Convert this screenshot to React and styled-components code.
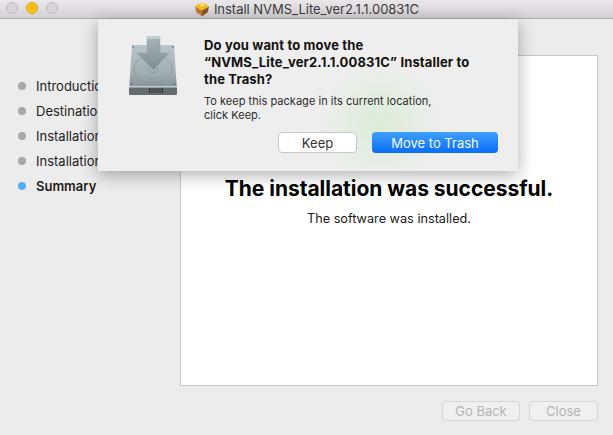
import styled, { createGlobalStyle } from "styled-components";

const GlobalStyle = createGlobalStyle`
  html, body { margin: 0; padding: 0; }
  body {
    width: 613px;
    height: 435px;
    overflow: hidden;
    background: #ececec;
    font-family: "Inter", "Liberation Sans", sans-serif;
    -webkit-font-smoothing: antialiased;
  }
`;

const steps = [
  { label: "Introduction" },
  { label: "Destination Select" },
  { label: "Installation Type" },
  { label: "Installation" },
  { label: "Summary", active: true },
];

const PackageIcon = () => (
  <svg width="16" height="15" viewBox="0 0 18 16">
    <path d="M9 8 L17 4 L15.5 11 L9 15.5 Z" fill="#8f5226" />
    <path d="M9 8 L1 4 L2.5 11 L9 15.5 Z" fill="#c47a3c" />
    <path d="M1 5 L5 1.5 L9 0.5 L13 1.5 L17 5 L9 9 Z" fill="#f2b92a" />
    <path d="M5 2 L9 1 L13 2.5 L9 5 Z" fill="#f9dd70" />
  </svg>
);

const DiskIcon = () => (
  <svg width="50" height="60" viewBox="0 0 50 60">
    <defs>
      <linearGradient id="body" x1="0" y1="0" x2="0" y2="1">
        <stop offset="0" stopColor="#b8c6cc" />
        <stop offset="0.55" stopColor="#a2b0b4" />
        <stop offset="1" stopColor="#7e8a8c" />
      </linearGradient>
      <linearGradient id="arrow" x1="0" y1="0" x2="0" y2="1">
        <stop offset="0" stopColor="#a9b5b8" />
        <stop offset="1" stopColor="#7d8b90" />
      </linearGradient>
    </defs>
    <path d="M4 9 H46 L49 55 Q49 57 47 57 H3 Q1 57 1 55 Z" fill="url(#body)" />
    <rect x="1" y="51" width="48" height="8" rx="1.5" fill="#646c6e" />
    <rect x="1" y="50" width="48" height="1.5" fill="#c3cdd0" />
    <ellipse cx="25" cy="33" rx="19" ry="14" fill="none" stroke="#8a979b" strokeWidth="0.8" />
    <ellipse cx="25" cy="33" rx="5" ry="3.5" fill="none" stroke="#8a979b" strokeWidth="0.8" />
    <path d="M19 1 Q19 0 20 0 H31 Q32 0 32 1 V17 H41 L25.5 34 L9 17 H19 Z" fill="url(#arrow)" stroke="#96a3a7" strokeWidth="0.5" />
    <rect x="19" y="0" width="13" height="3" fill="#c2cccf" />
    <rect x="21" y="52" width="14" height="5" fill="#2e3436" />
    <path d="M23 52 V57 M25 52 V57 M27 52 V57 M29 52 V57 M31 52 V57 M33 52 V57" stroke="#8a9496" strokeWidth="0.7" />
    <circle cx="5" cy="11" r="0.8" fill="#4c5659" />
    <circle cx="45" cy="11" r="0.8" fill="#4c5659" />
    <circle cx="3.5" cy="48" r="0.8" fill="#4c5659" />
    <circle cx="46.5" cy="48" r="0.8" fill="#4c5659" />
  </svg>
);

export default function App() {
  return (
    <Window>
      <GlobalStyle />
      <TitleBar>
        <Lights>
          <Light />
          <Light $color="#fdbc1a" />
          <Light />
        </Lights>
        <Title>
          <PackageIcon />
          Install NVMS_Lite_ver2.1.1.00831C
        </Title>
      </TitleBar>
      <Body>
        <Sidebar>
          {steps.map((step) => (
            <Step key={step.label} $active={step.active}>
              <Bullet $active={step.active} />
              {step.label}
            </Step>
          ))}
        </Sidebar>
        <Main>
          <Panel>
            <Headline>The installation was successful.</Headline>
            <Subline>The software was installed.</Subline>
          </Panel>
          <Footer>
            <FooterButton $width={78}>Go Back</FooterButton>
            <FooterButton $width={69}>Close</FooterButton>
          </Footer>
        </Main>
      </Body>
      <Dialog>
        <IconSlot>
          <DiskIcon />
        </IconSlot>
        <DialogText>
          <Question>
            Do you want to move the
            <br />
            “NVMS_Lite_ver2.1.1.00831C” Installer to
            <br />
            the Trash?
          </Question>
          <Note>
            To keep this package in its current location,
            <br />
            click Keep.
          </Note>
          <Actions>
            <KeepButton>Keep</KeepButton>
            <TrashButton>Move to Trash</TrashButton>
          </Actions>
        </DialogText>
      </Dialog>
    </Window>
  );
}

const Window = styled.div`
  position: relative;
  width: 613px;
  height: 435px;
  display: flex;
  flex-direction: column;
  overflow: hidden;
`;

const TitleBar = styled.div`
  position: relative;
  height: 18px;
  flex: none;
  display: flex;
  align-items: center;
  justify-content: center;
  background: linear-gradient(#e9e7e9, #d3d1d3);
  border-bottom: 1px solid #aeacae;
`;

const Lights = styled.div`
  position: absolute;
  left: 6px;
  top: 2px;
  display: flex;
  gap: 8px;
`;

const Light = styled.span`
  width: 12px;
  height: 12px;
  box-sizing: border-box;
  border-radius: 50%;
  background: ${({ $color }) => $color || "#d6d4d6"};
  border: 1px solid ${({ $color }) => ($color ? "#e9a820" : "#bfbdbf")};
`;

const Title = styled.div`
  display: flex;
  align-items: center;
  gap: 4px;
  font-size: 13px;
  letter-spacing: -0.02px;
  color: #3c3c3c;
  white-space: nowrap;
`;

const Body = styled.div`
  flex: 1;
  display: flex;
`;

const Sidebar = styled.div`
  width: 180px;
  flex: none;
  box-sizing: border-box;
  padding: 54px 0 0 18px;
  display: flex;
  flex-direction: column;
`;

const Step = styled.div`
  height: 25px;
  display: flex;
  align-items: center;
  gap: 10px;
  font-size: 13px;
  font-weight: ${({ $active }) => ($active ? 600 : 400)};
  color: #1d1d1d;
  white-space: nowrap;
`;

const Bullet = styled.span`
  width: 8px;
  height: 8px;
  border-radius: 50%;
  background: ${({ $active }) => ($active ? "#55aef7" : "#a8a8a8")};
`;

const Main = styled.div`
  flex: 1;
  display: flex;
  flex-direction: column;
  padding: 36px 15px 0 0;
`;

const Panel = styled.div`
  height: 331px;
  box-sizing: border-box;
  background: #fff;
  border: 1px solid #c9c9c9;
  display: flex;
  flex-direction: column;
  align-items: center;
  padding-top: 120px;
`;

const Headline = styled.div`
  font-size: 21px;
  font-weight: 700;
  line-height: 26px;
  letter-spacing: -0.03px;
  color: #000;
`;

const Subline = styled.div`
  margin-top: 8px;
  font-size: 12.7px;
  line-height: 18px;
  color: #1a1a1a;
`;

const Footer = styled.div`
  display: flex;
  justify-content: flex-end;
  gap: 9px;
  margin-top: 15px;
`;

const FooterButton = styled.div`
  width: ${({ $width }) => $width}px;
  height: 20px;
  box-sizing: border-box;
  display: flex;
  align-items: center;
  justify-content: center;
  font-size: 13px;
  color: #b5b5b5;
  background: #f0f0f0;
  border: 1px solid #d6d6d6;
  border-radius: 4px;
`;

const Dialog = styled.div`
  position: absolute;
  left: 98px;
  top: 19px;
  width: 420px;
  height: 152px;
  box-sizing: border-box;
  display: flex;
  background:
    radial-gradient(circle at 282px 105px, rgba(214, 236, 208, 0.75), rgba(236, 236, 236, 0) 62px),
    #eeeeee;
  box-shadow: 0 4px 16px rgba(0, 0, 0, 0.32);
`;

const IconSlot = styled.div`
  width: 106px;
  flex: none;
  padding: 17px 0 0 30px;
  box-sizing: border-box;
`;

const DialogText = styled.div`
  flex: 1;
  padding: 18px 20px 0 0;
`;

const Question = styled.div`
  font-size: 13px;
  font-weight: 700;
  line-height: 17px;
  letter-spacing: 0.15px;
  color: #111;
`;

const Note = styled.div`
  margin-top: 6px;
  font-size: 11px;
  line-height: 14px;
  letter-spacing: 0.03px;
  color: #2c2c2c;
`;

const Actions = styled.div`
  display: flex;
  justify-content: flex-end;
  gap: 15px;
  margin-top: 10px;
`;

const KeepButton = styled.div`
  width: 79px;
  height: 21px;
  box-sizing: border-box;
  display: flex;
  align-items: center;
  justify-content: center;
  font-size: 13px;
  color: #333;
  background: #fff;
  border: 1px solid #c8c8c8;
  border-radius: 4px;
`;

const TrashButton = styled.div`
  width: 126px;
  height: 21px;
  display: flex;
  align-items: center;
  justify-content: center;
  font-size: 13px;
  color: #f4f9ff;
  background: linear-gradient(#3fa0fb, #0a6dfa);
  border-radius: 4px;
`;
